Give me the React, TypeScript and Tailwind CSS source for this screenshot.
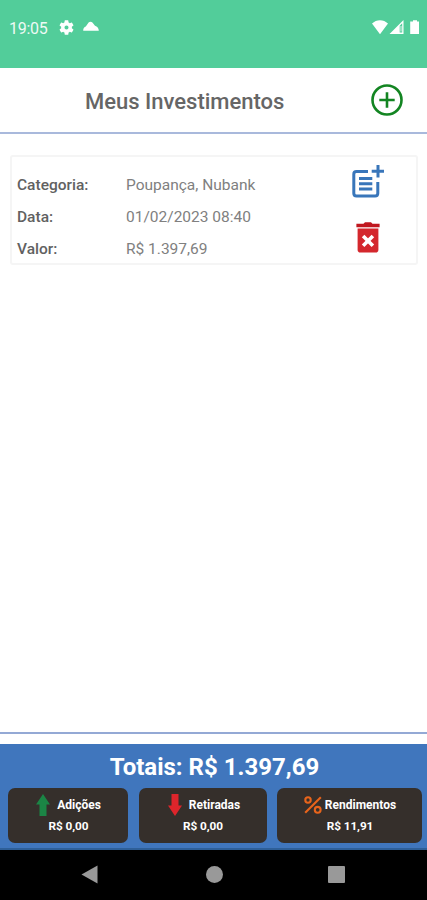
import React from "react";

interface Investment {
  category: string;
  date: string;
  value: string;
}

interface Summary {
  label: string;
  value: string;
  icon: React.ReactNode;
  box: string;
}

const investments: Investment[] = [
  {
    category: "Poupança, Nubank",
    date: "01/02/2023 08:40",
    value: "R$ 1.397,69",
  },
];

const ArrowIcon: React.FC<{ className: string }> = ({ className }) => (
  <svg viewBox="0 0 14 22" className={`w-[14px] h-[22px] ${className}`}>
    <path d="M7 0L14 10.5H10.5V22H3.5V10.5H0Z" fill="currentColor" />
  </svg>
);

const PercentIcon: React.FC = () => (
  <svg
    viewBox="0 0 18 18"
    className="w-[18px] h-[18px] mr-[3px]"
    fill="none"
    stroke="#e8641b"
    strokeWidth="2.1"
  >
    <circle cx="4" cy="4" r="2.7" />
    <circle cx="13.7" cy="13.8" r="2.9" />
    <path d="M16.8 1.2L1.2 16.8" />
  </svg>
);

const summaries: Summary[] = [
  {
    label: "Adições",
    value: "R$ 0,00",
    icon: <ArrowIcon className="text-[#1b8545] mr-[7px]" />,
    box: "w-[120px] pl-px",
  },
  {
    label: "Retiradas",
    value: "R$ 0,00",
    icon: <ArrowIcon className="text-[#dd252b] rotate-180 mr-[7px] ml-[2px]" />,
    box: "w-[128px] ml-[11px]",
  },
  {
    label: "Rendimentos",
    value: "R$ 11,91",
    icon: <PercentIcon />,
    box: "w-[145px] ml-[10px] pl-px",
  },
];

const StatusBar: React.FC = () => (
  <div className="h-[68px] bg-[#52cd9a] text-white flex items-start pt-[18px] pl-[9px] pr-[7px]">
    <span className="w-[50px] text-[16px] leading-[21px] tracking-[-0.3px] opacity-90">
      19:05
    </span>
    <svg viewBox="2 2 20 20" className="w-[15px] h-[15px] mt-[2px]">
      <path
        fill="currentColor"
        d="M19.14 12.94c.04-.3.06-.61.06-.94s-.02-.64-.07-.94l2.03-1.58a.49.49 0 0 0 .12-.61l-1.92-3.32a.49.49 0 0 0-.59-.22l-2.39.96a7 7 0 0 0-1.62-.94l-.36-2.54a.48.48 0 0 0-.48-.41h-3.84a.47.47 0 0 0-.47.41l-.36 2.54c-.59.24-1.13.57-1.62.94l-2.39-.96a.48.48 0 0 0-.59.22L2.74 8.87a.47.47 0 0 0 .12.61l2.03 1.58a6 6 0 0 0 0 1.88l-2.03 1.58a.49.49 0 0 0-.12.61l1.92 3.32c.12.22.37.29.59.22l2.39-.96c.5.38 1.03.7 1.62.94l.36 2.54c.05.24.24.41.48.41h3.84c.24 0 .44-.17.47-.41l.36-2.54c.59-.24 1.13-.56 1.62-.94l2.39.96c.22.08.47 0 .59-.22l1.92-3.32a.47.47 0 0 0-.12-.61zM12 14.7a2.7 2.7 0 1 1 0-5.4 2.7 2.7 0 0 1 0 5.4"
      />
    </svg>
    <svg viewBox="0 0 16 10" className="w-4 h-[10px] ml-[9px] mt-[3px]">
      <path
        fill="currentColor"
        d="M.2 9.7C.2 7.4 1.2 6.2 2.8 5.6L5.6 1.5C6.6.4 8.4.4 9.4 1.5L12 4.7C14.2 5.4 15.8 7 15.8 9.7Z"
      />
    </svg>
    <svg viewBox="0 0 48 16" className="w-12 h-4 ml-auto mt-[2px]">
      <path
        fill="currentColor"
        fillRule="evenodd"
        d="M0 3.6C4.5-1 11.5-1 16 3.6L8 14.2ZM31.5 0V14H17.5ZM30.2 3.2L27.7 5.7V12.6H30.2ZM39 1.5H41V.2H45V1.5H47V14H38.2V1.5Z"
      />
      <path fill="currentColor" d="M28.6 6H29.4V11.6H28.6Z" />
    </svg>
  </div>
);

const AddIcon: React.FC = () => (
  <svg
    viewBox="0 0 32 32"
    className="w-8 h-8"
    fill="none"
    stroke="#138522"
    strokeWidth="2.6"
  >
    <circle cx="16" cy="16" r="14.5" />
    <path d="M16 8.3V23.7M8.3 16H23.7" />
  </svg>
);

const PostAddIcon: React.FC = () => (
  <svg
    viewBox="0 0 32 33"
    className="w-8 h-[33px]"
    fill="none"
    stroke="#3976ba"
    strokeWidth="3"
  >
    <path d="M16 6.5H4.5Q1.8 6.5 1.8 9.2V28.3Q1.8 31 4.5 31H23.1Q25.8 31 25.8 28.3V17" />
    <path d="M7 13.5H20.3M7 18.7H20.3M7 23.9H20.3M26 0V12.5M19.7 6.3H32" />
  </svg>
);

const TrashIcon: React.FC = () => (
  <svg viewBox="0 0 24 31" className="w-6 h-[31px]">
    <path d="M7.5 1.7L9 .2H15L16.5 1.7H23.6V5.3H.4V1.7Z" fill="#c0171f" />
    <path
      d="M1.6 6.4H22.4V27.7Q22.4 30.5 19.6 30.5H4.4Q1.6 30.5 1.6 27.7Z"
      fill="#d4272d"
    />
    <path
      d="M7.1 14L16.9 23.8M16.9 14L7.1 23.8"
      stroke="white"
      strokeWidth="3.6"
    />
  </svg>
);

const Field: React.FC<{ label: string; value: string }> = ({
  label,
  value,
}) => (
  <div className="flex">
    <b className="w-[109px] font-medium text-[#616161]">{label}</b>
    <span>{value}</span>
  </div>
);

const InvestmentCard: React.FC<{ item: Investment }> = ({ item }) => (
  <div className="ml-[10px] mr-[9px] mt-[21px] h-[110px] border-2 border-[#f5f5f5] rounded-[3px] flex pl-[5px]">
    <div className="pt-[12px] w-[335px] text-[15.5px] leading-8 text-[#808080]">
      <Field label="Categoria:" value={item.category} />
      <Field label="Data:" value={item.date} />
      <Field label="Valor:" value={item.value} />
    </div>
    <div className="pt-2">
      <PostAddIcon />
      <div className="mt-[24px] ml-[3.5px]">
        <TrashIcon />
      </div>
    </div>
  </div>
);

const Totals: React.FC = () => (
  <div className="h-[106px] bg-[#4076bd] text-white font-bold border-b-2 border-[#2e5f98]">
    <div className="h-11 text-center text-[24px] leading-[47px] pl-[2px]">
      Totais: R$ 1.397,69
    </div>
    <div className="flex pl-2">
      {summaries.map((s) => (
        <div
          key={s.label}
          className={`h-[55px] bg-[#352f2b] rounded-[7px] pt-[5px] ${s.box}`}
        >
          <div className="h-[23px] flex items-center justify-center text-[12px]">
            {s.icon}
            <span>{s.label}</span>
          </div>
          <div className="text-center text-[11.8px] leading-[21px] tracking-[-0.1px]">
            {s.value}
          </div>
        </div>
      ))}
    </div>
  </div>
);

const NavBar: React.FC = () => (
  <div className="h-[50px] bg-black flex text-[#999999] pl-[81px]">
    <svg viewBox="0 0 17 19" className="w-[17px] h-[19px] mt-[15px]">
      <path d="M16.5.5V18.5L.5 9.5Z" fill="currentColor" />
    </svg>
    <div className="w-[17px] h-[17px] rounded-full bg-[#999999] mt-4 ml-[107.5px]" />
    <div className="w-[17px] h-[17px] rounded-[1px] bg-[#999999] mt-4 ml-[105.5px]" />
  </div>
);

const App: React.FC = () => {
  return (
    <div className="w-[427px] h-[900px] bg-white flex flex-col overflow-hidden font-[Roboto,sans-serif]">
      <StatusBar />

      {/* Header */}

      <div className="h-[66px] border-b-2 border-[#a9b9dc] flex items-center pl-[85px] pr-6 justify-between">
        <h1 className="text-[22px] leading-8 pt-[3px] font-medium text-[#666666]">
          Meus Investimentos
        </h1>
        <AddIcon />
      </div>

      {/* Investments */}

      <div className="flex-1">
        {investments.map((item) => (
          <InvestmentCard key={item.date} item={item} />
        ))}
      </div>

      {/* Footer */}

      <div className="h-[12px] border-t-2 border-[#94a9d5]" />
      <Totals />
      <NavBar />
    </div>
  );
};

export default App;
